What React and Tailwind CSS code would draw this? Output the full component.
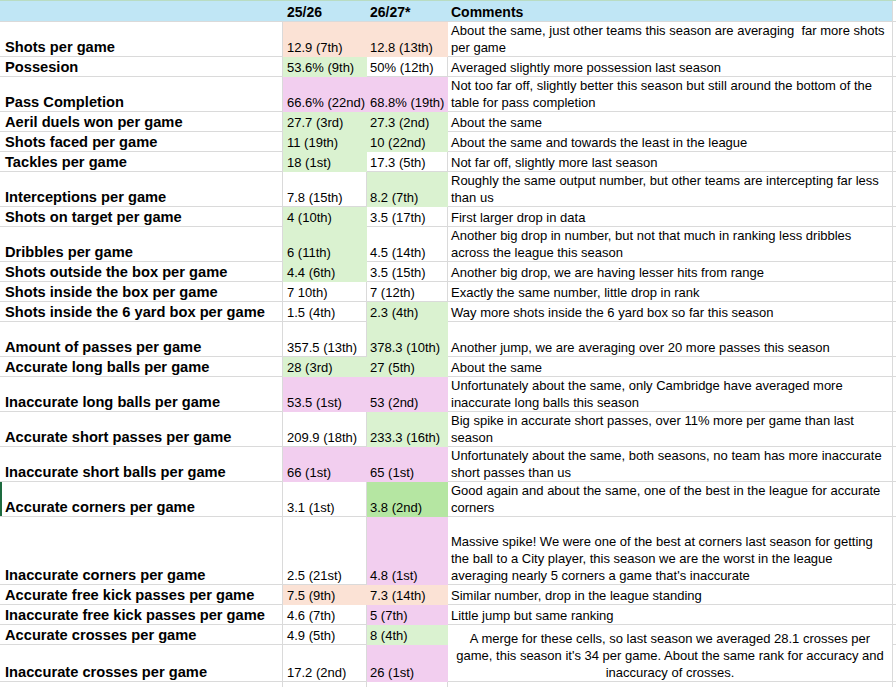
import React from "react";

const W = "bg-white";
const P = "bg-[#fbe2d5]";
const G = "bg-[#daf2d0]";
const K = "bg-[#f2ceef]";
const SG = "bg-[#b5e6a2]";

const borderFor = {
  [W]: "border-[#dadada]",
  [P]: "border-[#fbe2d5]",
  [G]: "border-[#daf2d0]",
  [K]: "border-[#f2ceef]",
  [SG]: "border-[#b5e6a2]",
};

const heights = {
  20: "h-[20px]",
  35: "h-[35px]",
  37: "h-[37px]",
  68: "h-[68px]",
};

const rows = [
  { h: 35, label: "Shots per game", a: "12.9 (7th)", ab: P, b: "12.8 (13th)", bb: P, c: "About the same, just other teams this season are averaging  far more shots\nper game" },
  { h: 20, label: "Possesion", a: "53.6% (9th)", ab: G, b: "50% (12th)", bb: W, c: "Averaged slightly more possession last season" },
  { h: 35, label: "Pass Completion", a: "66.6% (22nd)", ab: K, b: "68.8% (19th)", bb: K, c: "Not too far off, slightly better this season but still around the bottom of the\ntable for pass completion" },
  { h: 20, label: "Aeril duels won per game", a: "27.7 (3rd)", ab: G, b: "27.3 (2nd)", bb: G, c: "About the same" },
  { h: 20, label: "Shots faced per game", a: "11 (19th)", ab: G, b: "10 (22nd)", bb: G, c: "About the same and towards the least in the league" },
  { h: 20, label: "Tackles per game", a: "18 (1st)", ab: G, b: "17.3 (5th)", bb: W, c: "Not far off, slightly more last season" },
  { h: 35, label: "Interceptions per game", a: "7.8 (15th)", ab: W, b: "8.2 (7th)", bb: G, c: "Roughly the same output number, but other teams are intercepting far less\nthan us" },
  { h: 20, label: "Shots on target per game", a: "4 (10th)", ab: G, b: "3.5 (17th)", bb: W, c: "First larger drop in data" },
  { h: 35, label: "Dribbles per game", a: "6 (11th)", ab: G, b: "4.5 (14th)", bb: W, c: "Another big drop in number, but not that much in ranking less dribbles\nacross the league this season" },
  { h: 20, label: "Shots outside the box per game", a: "4.4 (6th)", ab: G, b: "3.5 (15th)", bb: W, c: "Another big drop, we are having lesser hits from range" },
  { h: 20, label: "Shots inside the box per game", a: "7 10th)", ab: W, b: "7 (12th)", bb: W, c: "Exactly the same number, little drop in rank" },
  { h: 20, label: "Shots inside the 6 yard box per game", a: "1.5 (4th)", ab: W, b: "2.3 (4th)", bb: G, c: "Way more shots inside the 6 yard box so far this season" },
  { h: 35, label: "Amount of passes per game", a: "357.5 (13th)", ab: W, b: "378.3 (10th)", bb: G, c: "Another jump, we are averaging over 20 more passes this season" },
  { h: 20, label: "Accurate long balls per game", a: "28 (3rd)", ab: G, b: "27 (5th)", bb: G, c: "About the same" },
  { h: 35, label: "Inaccurate long balls per game", a: "53.5 (1st)", ab: K, b: "53 (2nd)", bb: K, c: "Unfortunately about the same, only Cambridge have averaged more\ninaccurate long balls this season" },
  { h: 35, label: "Accurate short passes per game", a: "209.9 (18th)", ab: W, b: "233.3 (16th)", bb: G, c: "Big spike in accurate short passes, over 11% more per game than last\nseason" },
  { h: 35, label: "Inaccurate short balls per game", a: "66 (1st)", ab: K, b: "65 (1st)", bb: K, c: "Unfortunately about the same, both seasons, no team has more inaccurate\nshort passes than us" },
  { h: 35, label: "Accurate corners per game", a: "3.1 (1st)", ab: W, b: "3.8 (2nd)", bb: SG, c: "Good again and about the same, one of the best in the league for accurate\ncorners", sel: true },
  { h: 68, label: "Inaccurate corners per game", a: "2.5 (21st)", ab: W, b: "4.8 (1st)", bb: K, c: "Massive spike! We were one of the best at corners last season for getting\nthe ball to a City player, this season we are the worst in the league\naveraging nearly 5 corners a game that's inaccurate" },
  { h: 20, label: "Accurate free kick passes per game", a: "7.5 (9th)", ab: P, b: "7.3 (14th)", bb: P, c: "Similar number, drop in the league standing" },
  { h: 20, label: "Inaccurate free kick passes per game", a: "4.6 (7th)", ab: W, b: "5 (7th)", bb: K, c: "Little jump but same ranking" },
  { h: 20, label: "Accurate crosses per game", a: "4.9 (5th)", ab: W, b: "8 (4th)", bb: G, merged: "A merge for these cells, so last season we averaged 28.1 crosses per\ngame, this season it's 34 per game. About the same rank for accuracy and\ninaccuracy of crosses." },
  { h: 37, label: "Inaccurate crosses per game", a: "17.2 (2nd)", ab: W, b: "26 (1st)", bb: K, skip: true },
  { h: 20, label: "", a: "", ab: W, b: "", bb: W, c: "" },
];

const Cell = ({ bg = W, h, className = "", children }) => (
  <div
    className={`flex items-end border-r border-b ${bg} ${borderFor[bg]} ${heights[h]} ${className}`}
  >
    {children}
  </div>
);

const App = () => {
  return (
    <div
      className="w-[896px] h-[687px] overflow-hidden bg-white text-black"
      style={{ fontFamily: '"Liberation Sans", Arial, sans-serif' }}
    >
      <div className="h-[1px] bg-[#b9dcc2]" />

      <div className="grid grid-cols-[283px_84px_81px_445px_1fr] leading-[17px]">
        {/* header */}
        <div className="h-[21px] bg-[#c0e6f5] border-b border-[#dadada]" />
        <div className="h-[21px] bg-[#c0e6f5] border-b border-[#dadada] flex items-end px-[4px] font-bold text-[14px]">
          25/26
        </div>
        <div className="h-[21px] bg-[#c0e6f5] border-b border-[#dadada] flex items-end px-[3px] font-bold text-[14px]">
          26/27*
        </div>
        <div className="h-[21px] bg-[#c0e6f5] border-b border-r border-[#dadada] border-r-[#dadada] flex items-end px-[3px] font-bold text-[14px]">
          Comments
        </div>
        <div className="h-[21px] border-b border-[#dadada]" />

        {rows.map((r, i) => (
          <React.Fragment key={i}>
            <Cell
              h={r.h}
              className={`pl-[5px] font-bold text-[14.67px] whitespace-nowrap ${
                r.sel ? "shadow-[inset_2px_0_0_#1d6b3f]" : ""
              }`}
            >
              {r.label}
            </Cell>
            <Cell h={r.h} bg={r.ab} className="px-[4px] text-[13px] whitespace-nowrap">
              {r.a}
            </Cell>
            <Cell h={r.h} bg={r.bb} className="px-[3px] text-[13px] whitespace-nowrap">
              {r.b}
            </Cell>
            {r.merged ? (
              <div className="row-span-2 flex items-end justify-center border-r border-b border-[#dadada] text-[13px] text-center whitespace-pre">
                {r.merged}
              </div>
            ) : r.skip ? null : (
              <Cell h={r.h} className="px-[3px] text-[13px] whitespace-pre">
                {r.c}
              </Cell>
            )}
            <div className={`border-b border-[#dadada] ${heights[r.h]}`} />
          </React.Fragment>
        ))}
      </div>
    </div>
  );
};

export default App;
